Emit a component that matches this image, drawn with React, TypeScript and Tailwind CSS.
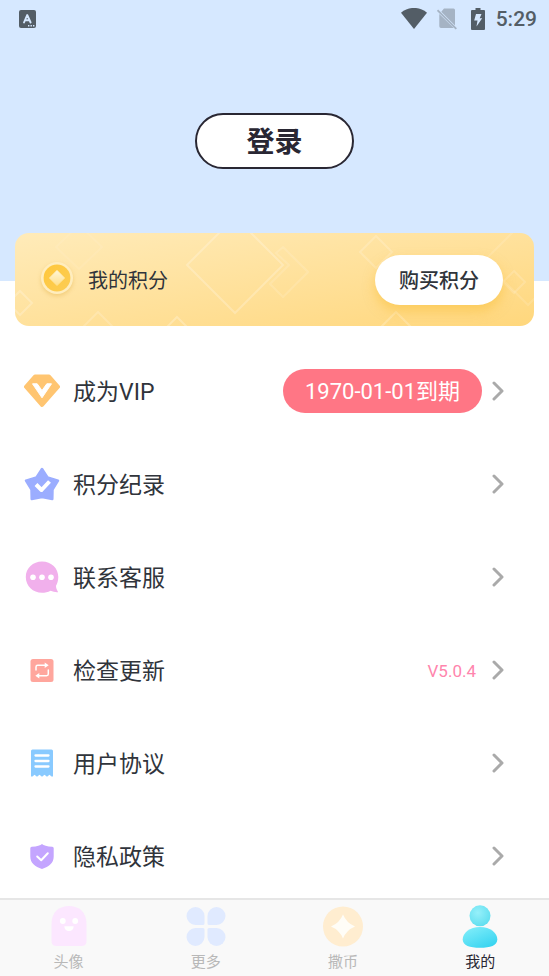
import type { ReactNode } from 'react';

const StatusBar = () => (
  <div className="flex h-[38px] items-center justify-between pl-[19px] pr-3 text-[#535d66]">
    <svg width="17" height="19" viewBox="0 0 17 19" aria-hidden="true">
      <rect width="17" height="18" y="0" rx="2" fill="currentColor" />
      <path d="M5 12.5 8.2 5 11.6 12.5M6.2 10.3h4.2" fill="none" stroke="#d6e8ff" strokeWidth="1.9" strokeLinejoin="round" strokeLinecap="round" />
      <path d="M9 15.8h1.4M11.5 15.8h1.4M14 15.8h1.4" stroke="#d6e8ff" strokeWidth="1.4" />
    </svg>
    <div className="flex items-center">
      <svg width="26" height="22" viewBox="0 0 26 22" aria-hidden="true">
        <path d="M13 21 0 4.700C7.600-1.700 18.400-1.700 26 4.700Z" fill="currentColor" />
      </svg>
      <svg className="ml-2.5" width="20" height="22" viewBox="0 0 20 22" aria-hidden="true">
        <path d="M7 .5h9.500q1.500 0 1.500 1.500V17.500L4.300 3.700ZM2.300 5.900 16.800 20H4q-1.700 0-1.700-1.700Z" fill="#a5b3c4" />
        <path d="M.5 2.200 19.300 20.800" stroke="#a5b3c4" strokeWidth="1.800" />
      </svg>
      <svg className="ml-3.5" width="14" height="22" viewBox="0 0 14 22" aria-hidden="true">
        <path d="M4.500 0h5v2H13q1 0 1 1v18q0 1-1 1H1q-1 0-1-1V3q0-1 1-1h3.500Z" fill="currentColor" />
        <path d="m5 6h5.500L8.700 10.200h2.500L5.500 18.500l1-6H3.200Z" fill="#d6e8ff" />
      </svg>
      <span className="ml-[11px] text-[21px] leading-6 font-medium">5:29</span>
    </div>
  </div>
);

const CardPattern = () => (
  <svg className="absolute inset-0 h-full w-full" viewBox="0 0 519 93" preserveAspectRatio="xMaxYMid slice" aria-hidden="true">
    <g fill="none" stroke="#fff" strokeWidth="2">
      <path d="m220-16 48 48-48 48-48-48Z" strokeOpacity=".23" />
      <path d="m268 14 25 25-25 25-13-13 19-19-13-12Z" strokeOpacity=".13" />
      <path d="m361 3 16 16-16 16-16-16Z" strokeOpacity=".18" />
      <path d="m381 79 16 16-16 16-16-16Z" strokeOpacity=".22" />
      <path d="m513-16 44 44-44 44-44-44Z" strokeOpacity=".13" />
      <path d="m499 38 11 11-11 11-11-11Z" strokeOpacity=".16" />
      <path d="m64-8 23 22-23 22-23-22Z" strokeOpacity=".08" />
      <path d="m5 58 12 12L5 82-7 70Z" strokeOpacity=".22" />
      <path d="m83 79 20 20-20 20-20-20Z" strokeOpacity=".18" />
      <path d="m162 84 12 12-12 12-12-12Z" strokeOpacity=".25" />
    </g>
  </svg>
);

const Coin = () => (
  <svg className="drop-shadow-[0_2px_2px_rgba(222,170,60,0.4)]" width="32" height="36" viewBox="0 0 32 36" aria-hidden="true">
    <defs>
      <linearGradient id="coin" x1="0" y1="0" x2="1" y2="1">
        <stop stopColor="#ffc73b" />
        <stop offset="1" stopColor="#fccd55" />
      </linearGradient>
      <linearGradient id="coinMark" x1="0" y1="0" x2="0" y2="1">
        <stop stopColor="#fff6d8" />
        <stop offset="1" stopColor="#ffe08c" />
      </linearGradient>
    </defs>
    <circle cx="16" cy="16" r="16" fill="#ffedbe" />
    <circle cx="16" cy="16" r="13.400" fill="url(#coin)" />
    <path d="m16 8.500 7.500 7.500-7.500 7.500L8.500 16Z" fill="url(#coinMark)" stroke="url(#coinMark)" strokeLinejoin="round" />
  </svg>
);

const Icon = ({ children }: { children: ReactNode }) => (
  <svg width="36" height="36" viewBox="0 0 36 36" className="shrink-0" aria-hidden="true">
    {children}
  </svg>
);

const Chevron = () => (
  <svg width="12" height="20" viewBox="0 0 12 20" className="shrink-0" aria-hidden="true">
    <path d="m2 2 8 8-8 8" fill="none" stroke="#aaa" strokeWidth="3" strokeLinecap="round" strokeLinejoin="round" />
  </svg>
);

const items = [
  {
    id: 'vip',
    title: '成为VIP',
    icon: (
      <Icon>
        <path d="M11 3.500h14L34 13.700 18 32 2 13.700Z" fill="#ffc571" stroke="#ffc571" strokeWidth="4" strokeLinejoin="round" />
        <path d="m8.500 10.800 9.500 14L27.500 10.800h-4.700L18 17.500 13.200 10.800Z" fill="#fff" stroke="#fff" strokeLinejoin="round" />
      </Icon>
    ),
    extra: (
      <span className="mr-2.5 rounded-full bg-[#ff7685] px-[22px] pt-[9px] pb-[7px] text-[22px] leading-7 text-white">
        1970-01-01到期
      </span>
    ),
  },
  {
    id: 'records',
    title: '积分纪录',
    icon: (
      <Icon>
        <path d="M18 3 23.500 11.500 34 14.600 28.500 23.500 28.300 33 18 31 7.700 33 7.500 23.500 2 14.600 12.500 11.500Z" fill="#9badff" stroke="#9badff" strokeWidth="2.500" strokeLinejoin="round" />
        <path d="m12 18.500 5.500 5.500L25.500 15.500" fill="none" stroke="#fff" strokeWidth="4" strokeLinejoin="round" />
      </Icon>
    ),
  },
  {
    id: 'support',
    title: '联系客服',
    icon: (
      <Icon>
        <path d="M18 2.500C27.500 2.500 34.300 9.500 34.300 18c0 4-1.300 7-2.300 8.800 0 2.400.8 4.200 2.200 6.400-2.700.3-5-.4-7.700-1.400C24 33.200 21 33.800 18 33.800 9 33.800 1.800 27 1.800 18S9 2.500 18 2.500Z" fill="#f1b0ec" />
        <circle cx="9" cy="18.300" r="2.800" fill="#fff" />
        <circle cx="18" cy="18.300" r="2.800" fill="#fff" />
        <circle cx="27" cy="18.300" r="2.800" fill="#fff" />
      </Icon>
    ),
  },
  {
    id: 'update',
    title: '检查更新',
    icon: (
      <Icon>
        <rect x="6.500" y="7" width="23" height="23" rx="2.500" fill="#ffa69d" />
        <g fill="none" stroke="#fff" strokeWidth="1.500" strokeLinecap="round" strokeLinejoin="round">
          <path d="M12 18v-3q0-1.700 1.700-1.700h8.300M24.300 18v4q0 1.700-1.700 1.700H14" />
        </g>
        <path d="m20.700 10.600 4 2.700-4 2.700ZM15.300 21l-4 2.700 4 2.700Z" fill="#fff" />
      </Icon>
    ),
    extra: <span className="mr-4 pt-0.5 text-[17px] leading-6 text-[#ff85ad]">V5.0.4</span>,
  },
  {
    id: 'terms',
    title: '用户协议',
    icon: (
      <Icon>
        <path d="M8.500 4.500h19q1.500 0 1.500 1.500V31.500h-1.500l-2-1.700-2.500 2-2.500-2-2.500 2-2.500-2-2.500 2-2.500-2-2 1.700H7V6Q7 4.500 8.500 4.500Z" fill="#89caff" />
        <path d="M11.500 10.500h13M11.500 16h13M11.500 21.500h13" stroke="#fff" strokeWidth="2.300" strokeLinecap="round" />
      </Icon>
    ),
  },
  {
    id: 'privacy',
    title: '隐私政策',
    icon: (
      <Icon>
        <path d="M18 6q2.200 2.300 10.300 2.700 1.400.1 1.400 1.500v8.300c0 6.500-4.700 10.300-11.700 12.500-7-2.200-11.700-6-11.700-12.500v-8.300q0-1.400 1.400-1.500Q15.800 8.300 18 6Z" fill="#c4a5ff" />
        <path d="m13.200 18.500 4 3.700 6.600-7" fill="none" stroke="#fff" strokeWidth="2" strokeLinecap="round" strokeLinejoin="round" />
      </Icon>
    ),
  },
];

const TabIcon = ({ children }: { children: ReactNode }) => (
  <svg width="44" height="48" viewBox="0 0 44 48" aria-hidden="true">
    {children}
  </svg>
);

const tabs = [
  {
    id: 'avatar',
    title: '头像',
    icon: (
      <TabIcon>
        <path d="M4.500 24C4.500 12 12 6 22 6s17.500 6 17.500 18v17q0 5-5 5h-25q-5 0-5-5Z" fill="#fce7ff" />
        <circle cx="15.800" cy="21" r="2.900" fill="#fff" />
        <circle cx="28.200" cy="21" r="2.900" fill="#fff" />
        <path d="M17.300 26.300h9.400c0 2.800-2 4.800-4.700 4.800s-4.700-2-4.700-4.800Z" fill="#fff" />
      </TabIcon>
    ),
  },
  {
    id: 'more',
    title: '更多',
    icon: (
      <TabIcon>
        <g fill="#e0eaff">
          <path d="M11.500 7a9 9 0 0 1 9 9v7.500q0 1.500-1.500 1.500h-7.500a9 9 0 0 1 0-18Z" />
          <path d="M32.500 7a9 9 0 0 1 0 18H25q-1.500 0-1.500-1.500V16a9 9 0 0 1 9-9Z" />
          <path d="M11.500 46a9 9 0 0 1 0-18H19q1.500 0 1.500 1.500V37a9 9 0 0 1-9 9Z" />
          <path d="M32.500 46a9 9 0 0 1-9-9v-7.500q0-1.500 1.500-1.500h7.500a9 9 0 0 1 0 18Z" />
        </g>
      </TabIcon>
    ),
  },
  {
    id: 'coins',
    title: '撒币',
    icon: (
      <TabIcon>
        <circle cx="22" cy="26.500" r="20" fill="#ffedd0" />
        <path d="M22 14.500Q25.500 23 34 26.500 25.500 30 22 38.500 18.500 30 10 26.500 18.500 23 22 14.500Z" fill="#fffdf7" />
      </TabIcon>
    ),
  },
  {
    id: 'mine',
    title: '我的',
    active: true,
    icon: (
      <TabIcon>
        <defs>
          <radialGradient id="head" cx=".4" cy=".35" r=".7">
            <stop stopColor="#96f0fa" />
            <stop offset="1" stopColor="#5fdeef" />
          </radialGradient>
          <linearGradient id="body" x1=".1" y1="0" x2=".8" y2="1">
            <stop stopColor="#83eefa" />
            <stop offset="1" stopColor="#35d3f0" />
          </linearGradient>
        </defs>
        <circle cx="22" cy="15.800" r="10.500" fill="url(#head)" />
        <path d="M22 27c10.500 0 17.300 6 17.300 12.500 0 6-7 8.300-17.300 8.300S4.700 45.500 4.700 39.500C4.700 33 11.500 27 22 27Z" fill="url(#body)" />
      </TabIcon>
    ),
  },
];

export default function App() {
  return (
    <div className="flex h-screen flex-col bg-white font-[Roboto,'Noto_Sans_CJK_SC',sans-serif] text-[#30343b]">
      <main className="min-h-0 flex-1 overflow-y-auto [scrollbar-width:none]">
        <header className="h-[281px] bg-[#d6e8ff]">
          <StatusBar />
          <div className="flex justify-center pt-[75px]">
            <button className="h-14 w-[159px] rounded-full border-2 border-[#292733] bg-white pt-1 text-[28px] leading-10 font-bold text-[#292733]">
              登录
            </button>
          </div>
        </header>

        <section className="relative mx-[15px] -mt-12 flex h-[93px] items-center overflow-hidden rounded-[14px] bg-linear-to-br from-[#ffebb9] to-[#ffd77c] pl-[26px] pr-[31px]">
          <CardPattern />
          <div className="relative flex flex-1 items-center gap-[15px]">
            <Coin />
            <span className="pt-0.5 text-xl">我的积分</span>
          </div>
          <button className="relative h-[50px] w-32 rounded-full bg-white pt-0.5 text-xl font-medium shadow-[0_6px_12px_rgba(250,190,50,0.5)]">
            购买积分
          </button>
        </section>

        <ul className="pt-[18px]">
          {items.map((item) => (
            <li key={item.id}>
              <a href={`#${item.id}`} className="flex h-[93px] items-center pl-6 pr-[45px]">
                {item.icon}
                <span className="ml-[13px] flex-1 pt-1 text-[23px] leading-8">{item.title}</span>
                {item.extra}
                <Chevron />
              </a>
            </li>
          ))}
        </ul>
      </main>

      <nav className="grid h-[78px] shrink-0 grid-cols-4 border-t-2 border-[#e6e6e6] bg-[#f9f9f9]">
        {tabs.map((tab) => (
          <a
            key={tab.id}
            href={`#${tab.id}`}
            className={`flex flex-col items-center gap-1 text-[15px] leading-5 ${tab.active ? 'text-[#292733]' : 'text-[#b8b8b8]'}`}
          >
            {tab.icon}
            {tab.title}
          </a>
        ))}
      </nav>
    </div>
  );
}
